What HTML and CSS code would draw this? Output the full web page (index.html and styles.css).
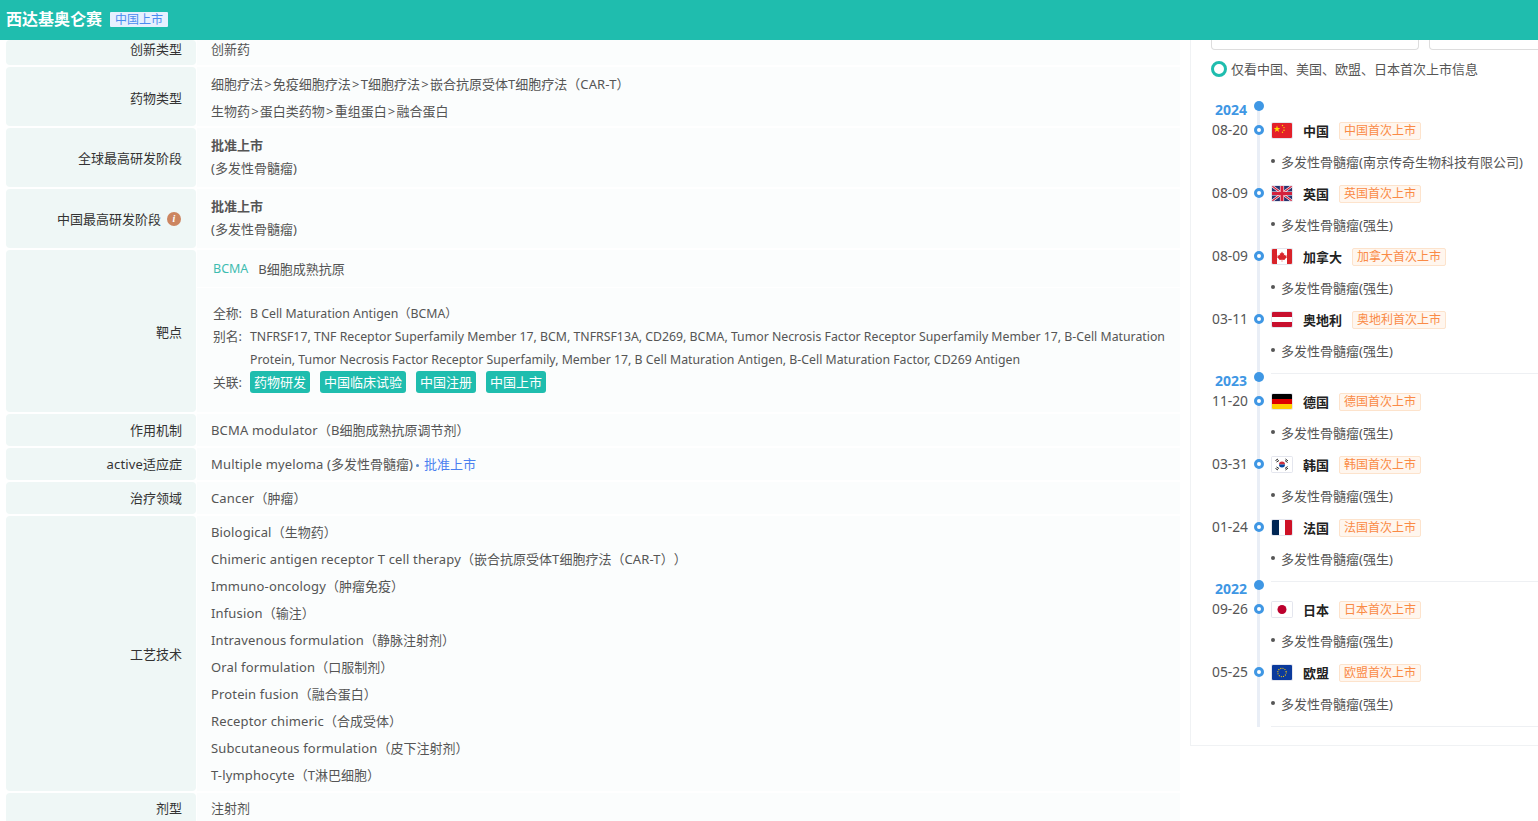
FILE: index.html
```html
<!DOCTYPE html>
<html lang="zh">
<head>
<meta charset="utf-8">
<title>西达基奥仑赛</title>
<link rel="stylesheet" href="styles.css">
</head>
<body>
<header class="topbar">
  <span class="drug-name">西达基奥仑赛</span>
  <span class="status-badge">中国上市</span>
</header>
<div class="page">
  <main class="info">
    <div class="row row-first"><div class="label">创新类型</div><div class="value pad-mid">创新药</div></div>
    <div class="row row-type">
      <div class="label">药物类型</div>
      <div class="value stack-27">
        <div>细胞疗法<span class="sep">&gt;</span>免疫细胞疗法<span class="sep">&gt;</span><span class="en">T</span>细胞疗法<span class="sep">&gt;</span>嵌合抗原受体<span class="en">T</span>细胞疗法（<span class="en">CAR-T</span>）</div>
        <div>生物药<span class="sep">&gt;</span>蛋白类药物<span class="sep">&gt;</span>重组蛋白<span class="sep">&gt;</span>融合蛋白</div>
      </div>
    </div>
    <div class="row row-phase">
      <div class="label">全球最高研发阶段</div>
      <div class="value stack-23"><div class="strong">批准上市</div><div>(多发性骨髓瘤)</div></div>
    </div>
    <div class="row row-phase">
      <div class="label">中国最高研发阶段<span class="info-dot">i</span></div>
      <div class="value stack-23"><div class="strong">批准上市</div><div>(多发性骨髓瘤)</div></div>
    </div>
    <div class="row row-target">
      <div class="label">靶点</div>
      <div class="value target">
        <div class="target-head"><span class="target-code">BCMA</span><span class="target-name">B细胞成熟抗原</span></div>
        <div class="target-body">
          <div class="kv"><span class="k">全称:</span><span class="v">B Cell Maturation Antigen（BCMA）</span></div>
          <div class="kv"><span class="k">别名:</span><span class="v">TNFRSF17, TNF Receptor Superfamily Member 17, BCM, TNFRSF13A, CD269, BCMA, Tumor Necrosis Factor Receptor Superfamily Member 17, B-Cell Maturation Protein, Tumor Necrosis Factor Receptor Superfamily, Member 17, B Cell Maturation Antigen, B-Cell Maturation Factor, CD269 Antigen</span></div>
          <div class="kv"><span class="k">关联:</span><span class="v tags"><span class="tag">药物研发</span><span class="tag">中国临床试验</span><span class="tag">中国注册</span><span class="tag">中国上市</span></span></div>
        </div>
      </div>
    </div>
    <div class="row row-single"><div class="label">作用机制</div><div class="value pad-mid"><span><span class="en">BCMA modulator</span>（<span class="en">B</span>细胞成熟抗原调节剂）</span></div></div>
    <div class="row row-single"><div class="label"><span><span class="en">active</span>适应症</span></div><div class="value pad-mid"><span><span class="en">Multiple myeloma (</span>多发性骨髓瘤)<span class="approved"><span class="approved-dot"></span>批准上市</span></span></div></div>
    <div class="row row-single"><div class="label">治疗领域</div><div class="value pad-mid"><span><span class="en">Cancer</span>（肿瘤）</span></div></div>
    <div class="row row-tech">
      <div class="label">工艺技术</div>
      <div class="value stack-27">
        <div><span class="en">Biological</span>（生物药）</div>
        <div><span class="en">Chimeric antigen receptor T cell therapy</span>（嵌合抗原受体<span class="en">T</span>细胞疗法（<span class="en">CAR-T</span>））</div>
        <div><span class="en">Immuno-oncology</span>（肿瘤免疫）</div>
        <div><span class="en">Infusion</span>（输注）</div>
        <div><span class="en">Intravenous formulation</span>（静脉注射剂）</div>
        <div><span class="en">Oral formulation</span>（口服制剂）</div>
        <div><span class="en">Protein fusion</span>（融合蛋白）</div>
        <div><span class="en">Receptor chimeric</span>（合成受体）</div>
        <div><span class="en">Subcutaneous formulation</span>（皮下注射剂）</div>
        <div><span class="en">T-lymphocyte</span>（<span class="en">T</span>淋巴细胞）</div>
      </div>
    </div>
    <div class="row row-last"><div class="label">剂型</div><div class="value pad-mid">注射剂</div></div>
  </main>
  <aside class="side">
    <div class="filters"><div class="filter filter-a"></div><div class="filter filter-b"></div></div>
    <div class="only-first"><span class="radio"></span>仅看中国、美国、欧盟、日本首次上市信息</div>
    <div class="timeline">
      <section class="year">
        <div class="year-head"><span class="year-label">2024</span><span class="year-dot"></span></div>
        <div class="event">
          <div class="event-head"><span class="date">08-20</span><span class="dot"></span>
            <svg class="flag" viewBox="0 0 20 15"><rect width="20" height="15" fill="#e3202a"/><polygon points="5,2.6 5.800,5 8.300,5 6.300,6.500 7,8.900 5,7.400 3,8.900 3.700,6.500 1.700,5 4.200,5" fill="#ffde00"/><circle cx="10.500" cy="2.500" r=".7" fill="#ffde00"/><circle cx="12" cy="4.600" r=".7" fill="#ffde00"/><circle cx="12" cy="7.200" r=".7" fill="#ffde00"/><circle cx="10.500" cy="9.300" r=".7" fill="#ffde00"/></svg>
            <span class="country">中国</span><span class="first">中国首次上市</span></div>
          <div class="detail"><span class="bullet"></span>多发性骨髓瘤(南京传奇生物科技有限公司)</div>
        </div>
        <div class="event">
          <div class="event-head"><span class="date">08-09</span><span class="dot"></span>
            <svg class="flag" viewBox="0 0 20 15"><rect width="20" height="15" fill="#27346f"/><path d="M0 0L20 15M20 0L0 15" stroke="#fff" stroke-width="2.500"/><path d="M0 0L20 15M20 0L0 15" stroke="#d4213d" stroke-width="1.300"/><path d="M10 0V15M0 7.500H20" stroke="#fff" stroke-width="4.200"/><path d="M10 0V15M0 7.500H20" stroke="#d4213d" stroke-width="3"/></svg>
            <span class="country">英国</span><span class="first">英国首次上市</span></div>
          <div class="detail"><span class="bullet"></span>多发性骨髓瘤(强生)</div>
        </div>
        <div class="event">
          <div class="event-head"><span class="date">08-09</span><span class="dot"></span>
            <svg class="flag" viewBox="0 0 20 15"><rect width="20" height="15" fill="#fff"/><rect width="5" height="15" fill="#d8232a"/><rect x="15" width="5" height="15" fill="#d8232a"/><path d="M10 2.500L11 4.500L12.200 4L11.800 6.600L13 5.600L13.500 6.700L14.800 6.500L14.300 8L14.900 8.400L12.600 10.200L12.900 11L10.200 10.700V13H9.800V10.700L7.100 11L7.400 10.200L5.100 8.400L5.700 8L5.200 6.500L6.500 6.700L7 5.600L8.200 6.600L7.800 4L9 4.500Z" fill="#d8232a"/></svg>
            <span class="country">加拿大</span><span class="first">加拿大首次上市</span></div>
          <div class="detail"><span class="bullet"></span>多发性骨髓瘤(强生)</div>
        </div>
        <div class="event">
          <div class="event-head"><span class="date">03-11</span><span class="dot"></span>
            <svg class="flag" viewBox="0 0 20 15"><rect width="20" height="15" fill="#c8102e"/><rect y="5" width="20" height="5" fill="#fff"/></svg>
            <span class="country">奥地利</span><span class="first">奥地利首次上市</span></div>
          <div class="detail"><span class="bullet"></span>多发性骨髓瘤(强生)</div>
        </div>
      </section>
      <section class="year">
        <div class="year-head"><span class="year-label">2023</span><span class="year-dot"></span></div>
        <div class="event">
          <div class="event-head"><span class="date">11-20</span><span class="dot"></span>
            <svg class="flag" viewBox="0 0 20 15"><rect width="20" height="5" fill="#000"/><rect y="5" width="20" height="5" fill="#dd0000"/><rect y="10" width="20" height="5" fill="#ffce00"/></svg>
            <span class="country">德国</span><span class="first">德国首次上市</span></div>
          <div class="detail"><span class="bullet"></span>多发性骨髓瘤(强生)</div>
        </div>
        <div class="event">
          <div class="event-head"><span class="date">03-31</span><span class="dot"></span>
            <svg class="flag" viewBox="0 0 20 15"><rect width="20" height="15" fill="#fff"/><path d="M7 7.500a3 3 0 0 1 6 0z" fill="#cd2e3a"/><path d="M7 7.500a3 3 0 0 0 6 0z" fill="#0047a0"/><path d="M3.500 3.500L6 2M4.500 5L7 3.500M13.500 2L16 4M13 3.500L15.500 5.500M3.500 11.500L6 13M4.500 10L7 11.500M13.500 13L16 11M13 11.500L15.500 9.500" stroke="#222" stroke-width="1"/></svg>
            <span class="country">韩国</span><span class="first">韩国首次上市</span></div>
          <div class="detail"><span class="bullet"></span>多发性骨髓瘤(强生)</div>
        </div>
        <div class="event">
          <div class="event-head"><span class="date">01-24</span><span class="dot"></span>
            <svg class="flag" viewBox="0 0 20 15"><rect width="7" height="15" fill="#002654"/><rect x="7" width="6" height="15" fill="#fff"/><rect x="13" width="7" height="15" fill="#ce1126"/></svg>
            <span class="country">法国</span><span class="first">法国首次上市</span></div>
          <div class="detail"><span class="bullet"></span>多发性骨髓瘤(强生)</div>
        </div>
      </section>
      <section class="year">
        <div class="year-head"><span class="year-label">2022</span><span class="year-dot"></span></div>
        <div class="event">
          <div class="event-head"><span class="date">09-26</span><span class="dot"></span>
            <svg class="flag" viewBox="0 0 20 15"><rect width="20" height="15" fill="#fff"/><circle cx="10" cy="7.500" r="4.500" fill="#bc002d"/></svg>
            <span class="country">日本</span><span class="first">日本首次上市</span></div>
          <div class="detail"><span class="bullet"></span>多发性骨髓瘤(强生)</div>
        </div>
        <div class="event">
          <div class="event-head"><span class="date">05-25</span><span class="dot"></span>
            <svg class="flag" viewBox="0 0 20 15"><rect width="20" height="15" fill="#0b3a9c"/><circle cx="10" cy="7.500" r="4.200" fill="none" stroke="#ffcc00" stroke-width="1.100" stroke-dasharray="1 1.200"/></svg>
            <span class="country">欧盟</span><span class="first">欧盟首次上市</span></div>
          <div class="detail"><span class="bullet"></span>多发性骨髓瘤(强生)</div>
        </div>
      </section>
    </div>
  </aside>
</div>
</body>
</html>
```
FILE: styles.css
```css
* { box-sizing: border-box; }
html, body { margin: 0; height: 821px; overflow: hidden; background: #fff; }
body {
  font-family: "Noto Sans", "Noto Sans CJK SC", sans-serif;
  font-size: 13px;
  color: #555;
  width: 1538px;
  text-spacing-trim: space-all;
}
.en { letter-spacing: .15px; }
.sep { margin: 0 1.2px; }
.topbar {
  height: 40px;
  background: #1fbdae;
  display: flex;
  align-items: center;
  padding: 0 0 2px 6px;
  gap: 8px;
}
.drug-name { color: #fff; font-size: 16px; font-weight: 700; margin-bottom: 2px; }
.status-badge {
  background: #e6f0ff; color: #4a8cf0; font-size: 12px; line-height: 15px;
  padding: 0 5px; border-radius: 1px;
}
.page { display: flex; height: 781px; overflow: hidden; align-items: flex-start; padding-left: 6px; }
.info { width: 1174px; flex: none; display: flex; flex-direction: column; gap: 2px; }
.row { display: flex; }
.label {
  width: 190px; flex: none; background: #eff7f6; color: #333;
  display: flex; align-items: center; justify-content: flex-end;
  padding-right: 14px; border-radius: 4px;
}
.value { flex: 1; background: #fbfdfd; margin-left: 1px; padding: 0 14px; }
.pad-mid { display: flex; align-items: center; }
.row-first { height: 25px; }
.row-first .label, .row-first .value { padding-bottom: 8px; }
.row-type { height: 59px; }
.row-type .label, .row-type .value { padding-top: 2px; }
.row-phase { height: 59px; }
.row-phase .value { padding-bottom: 2px; }
.row-target { height: 162px; }
.row-single { height: 32px; }
.row-single .label, .row-single .value { padding-bottom: 2px; }
.row-tech { height: 275px; }
.row-last { height: 40px; }
.row-last .label, .row-last .value { padding-bottom: 12px; }
.stack-27 { display: flex; flex-direction: column; justify-content: center; line-height: 27px; }
.stack-23 { display: flex; flex-direction: column; justify-content: center; line-height: 23px; }
.strong { font-weight: 700; }
.info-dot {
  width: 14px; height: 14px; border-radius: 50%; background: #cc8560; color: #fff;
  margin: 0 1px 0 6px; font: italic 700 10px/14px "Liberation Serif", serif; text-align: center;
}
.target { padding: 0; }
.target-head {
  height: 38px; padding: 0 16px; display: flex; align-items: center; gap: 10px;
  border-bottom: 1px solid #fff; font-size: 12.500px;
}
.target-name { font-size: 13px; }
.target-code { color: #3dbcb0; }
.target-body { padding: 14px 10px 0 16px; line-height: 23px; }
.kv { display: flex; }
.k { width: 37px; flex: none; font-size: 12.800px; }
.v { flex: 1; font-size: 12.300px; }
.tags { display: flex; gap: 10px; align-items: center; margin-top: -1px; }
.tag { background: #1fbdae; color: #fff; border-radius: 3px; padding: 0 4px; line-height: 22px; font-size: 13px; }
.approved { color: #4a80f0; margin-left: 3px; }
.approved-dot {
  display: inline-block; width: 3px; height: 3px; border-radius: 50%;
  background: #5a8ac8; vertical-align: middle; margin-right: 5px;
}
.side {
  width: 360px; flex: none; margin-left: 10px; height: 706px;
  border: 1px solid #f0f2f4; border-top: 0; border-right: 0; padding: 0 0 0 20px; background: #fff;
}
.filters { display: flex; gap: 10px; height: 10px; }
.filter { height: 10px; border: 1px solid #ddd; border-top: 0; border-radius: 0 0 4px 4px; }
.filter-a { width: 208px; }
.filter-b { width: 120px; }
.only-first { display: flex; align-items: center; height: 18px; margin-top: 9px; color: #555; gap: 4px; }
.radio { width: 16px; height: 16px; border: 3px solid #1fbdae; border-radius: 50%; flex: none; margin-top: 2px; }
.timeline { margin-top: 26px; position: relative; }
.timeline::before {
  content: ""; position: absolute; left: 46px; top: 5px; bottom: 0; width: 3px; background: #e9eef6;
}
.year { position: relative; }
.year-head { height: 17px; display: flex; align-items: flex-start; position: relative; }
.year-label { width: 36px; margin: -1px 7px 0 0; text-align: right; color: #3f97e4; font-weight: 700; font-size: 14px; line-height: 16px; }
.year-dot { width: 10px; height: 10px; border-radius: 50%; background: #3f97e4; margin-top: -2px; }
.event { position: relative; }
.event-head { display: flex; align-items: center; height: 21px; position: relative; }
.date { width: 37px; text-align: right; color: #555; font-size: 13.800px; flex: none; padding-bottom: 2px; }
.dot { width: 10px; height: 10px; border-radius: 50%; background: #fff; border: 3px solid #3f97e4; margin: 0 0 1px 6px; flex: none; }
.flag { width: 20px; height: 15px; margin-left: 8px; border-radius: 1px; flex: none; box-shadow: 0 0 0 1px #e4e6ee; }
.country { color: #222; font-weight: 600; margin-left: 11px; }
.first {
  margin-left: 10px; color: #fa8a45; background: #fff6ee; border: 1px solid #fde3cc;
  border-radius: 2px; font-size: 12px; line-height: 16px; padding: 0 4px;
}
.detail { display: flex; align-items: center; height: 42px; margin-left: 60px; color: #555; padding-bottom: 2px; }
.bullet { width: 4px; height: 4px; border-radius: 50%; background: #555; margin-right: 6px; flex: none; }
.event:last-child .detail { height: 44px; padding-bottom: 3px; border-bottom: 1px solid #eef0f3; }
```
